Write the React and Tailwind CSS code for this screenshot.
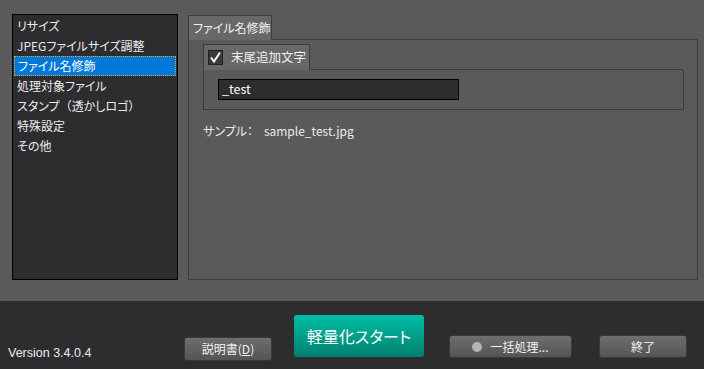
import React from 'react';

const items = [
    'リサイズ',
    'JPEGファイルサイズ調整',
    'ファイル名修飾',
    '処理対象ファイル',
    'スタンプ（透かしロゴ）',
    '特殊設定',
    'その他',
];

const jp = "font-['Noto_Sans_CJK_JP',sans-serif] [font-feature-settings:'palt']";

// full-width brackets keep their full width, as in the original UI font
const renderLabel = (label) =>
    label.split(/([（）])/).map((part, i) =>
        part === '（' || part === '）' ? (
            <span key={i} className="[font-feature-settings:normal]">
                {part}
            </span>
        ) : (
            part
        )
    );

const GrayButton = ({ className = '', children }) => (
    <div
        className={`flex items-center justify-center rounded-[3px] border border-[#3a3a3a] bg-gradient-to-b from-[#6e6e6e] to-[#545454] text-[12px] text-[#f2f2f2] ${className}`}
    >
        {children}
    </div>
);

const App = () => {
    const selected = 2;

    return (
        <div className={`flex h-[369px] w-[704px] flex-col overflow-hidden bg-[#5a5a5a] ${jp}`}>
            {/* top area */}
            <div className="flex h-[301px] shrink-0 items-start">
                {/* side menu */}
                <div className="ml-[12px] mt-[14px] h-[266px] w-[166px] border border-black bg-[#2d2d30] pt-[1px] pl-[1px]">
                    {items.map((label, i) => (
                        <div
                            key={label}
                            className={`flex h-[20px] w-[162px] items-center whitespace-nowrap pl-[3px] text-[12px] leading-none ${
                                i === selected
                                    ? 'border border-dotted border-[#f0a030] bg-[#0078d7] pl-[2px] text-white'
                                    : 'text-[#ececec]'
                            }`}
                        >
                            {renderLabel(label)}
                        </div>
                    ))}
                </div>

                {/* tab panel */}
                <div className="ml-[10px] mt-[15px] flex w-[510px] flex-col">
                    <div className="flex">
                        <div className="flex h-[25px] w-[84px] items-center whitespace-nowrap border border-b-0 border-[#3c3c3c] bg-[#686868] pl-[4px] text-[12px] text-[#f0f0f0]">
                            ファイル名修飾
                        </div>
                        <div className="flex-1 border-b border-[#3c3c3c]" />
                    </div>
                    <div className="h-[240px] border border-t-0 border-[#3c3c3c] px-[14px] pt-[4px]">
                        {/* group box */}
                        <div className="flex">
                            <div className="flex h-[26px] w-[107px] items-center whitespace-nowrap border border-b-0 border-[#3c3c3c] bg-[#686868] pl-[4px]">
                                <div className="flex h-[15px] w-[15px] items-center justify-center border border-[#222] bg-[#3a3a3a]">
                                    <svg width="13" height="13" viewBox="0 0 13 13">
                                        <path d="M2 6.5 L5 10.5 L11 1.5" fill="none" stroke="#f4f4f4" strokeWidth="2" />
                                    </svg>
                                </div>
                                <span className="ml-[8px] text-[12.5px] text-[#f0f0f0]">末尾追加文字</span>
                            </div>
                            <div className="w-[374px] border-b border-[#3c3c3c]" />
                        </div>
                        <div className="h-[40px] w-[481px] border border-t-0 border-[#3c3c3c] pl-[14px] pt-[9px]">
                            <div className="flex h-[21px] w-[241px] items-center border border-black bg-[#2d2d30] pl-[3px] text-[12.5px] text-white">
                                _test
                            </div>
                        </div>
                        <div className="mt-[12px] flex text-[12px] text-[#ececec]">
                            <span>サンプル：</span>
                            <span className="ml-[11px]">sample_test.jpg</span>
                        </div>
                    </div>
                </div>
            </div>

            {/* bottom bar */}
            <div className="flex flex-1 items-start bg-[#2d2d30]">
                <div className="ml-[8px] mt-[43px] w-[176px] font-['Liberation_Sans',sans-serif] text-[12.5px] text-[#ececec]">
                    Version 3.4.0.4
                </div>
                <GrayButton className="mt-[36px] h-[24px] w-[88px]">
                    <span>
                        説明書(<span className="underline">D</span>)
                    </span>
                </GrayButton>
                <div className="ml-[22px] mt-[14px] flex h-[42px] w-[130px] items-center justify-center rounded-[3px] bg-gradient-to-b from-[#00bfa5] to-[#00806f] text-[16px] text-white">
                    軽量化スタート
                </div>
                <GrayButton className="ml-[25px] mt-[34px] h-[23px] w-[123px]">
                    <span className="mr-[8px] h-[10px] w-[10px] rounded-full bg-[#b4b4b4]" />
                    <span>一括処理...</span>
                </GrayButton>
                <GrayButton className="ml-[27px] mt-[34px] h-[23px] w-[88px]">終了</GrayButton>
            </div>
        </div>
    );
};

export default App;
